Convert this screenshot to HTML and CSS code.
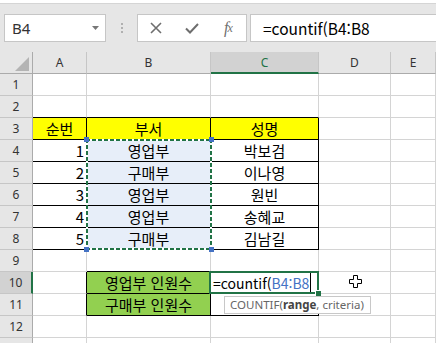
FILE: index.html
```html
<!DOCTYPE html>
<html lang="ko">
<head>
    <meta charset="UTF-8">
    <title>countif</title>
    <link rel="stylesheet" href="styles.css">
</head>
<body>
    <div class="formula-bar">
        <div class="name-box">
            <span>B4</span>
            <svg class="caret" width="7" height="4" viewBox="0 0 7 4"><polygon points="0,0 7,0 3.5,4" fill="#777"/></svg>
        </div>
        <div class="grip">
            <svg width="2" height="10" viewBox="0 0 2 10"><rect x="0" y="0" width="2" height="2" fill="#b0b0b0"/><rect x="0" y="4" width="2" height="2" fill="#b0b0b0"/><rect x="0" y="8" width="2" height="2" fill="#b0b0b0"/></svg>
        </div>
        <div class="fx-buttons">
            <span class="fx-btn">
                <svg width="12" height="12" viewBox="0 0 12 12"><path d="M1 1 L11 11 M11 1 L1 11" stroke="#6e6e6e" stroke-width="1.6"/></svg>
            </span>
            <span class="fx-btn">
                <svg width="14" height="11" viewBox="0 0 14 11"><path d="M1 5.5 L5 9.5 L13 1" fill="none" stroke="#6e6e6e" stroke-width="2"/></svg>
            </span>
            <span class="fx-btn fx-text">f<small>x</small></span>
        </div>
        <div class="formula-input">=countif(B4:B8</div>
    </div>

    <div class="sheet">
        <div class="col-head corner">
            <svg width="14" height="14" viewBox="0 0 14 14"><polygon points="14,0 14,14 0,14" fill="#b4b4b4"/></svg>
        </div>
        <div class="col-head">A</div>
        <div class="col-head">B</div>
        <div class="col-head active">C</div>
        <div class="col-head">D</div>
        <div class="col-head">E</div>

        <div class="row-head">1</div>
        <div class="cell"></div><div class="cell"></div><div class="cell"></div><div class="cell"></div><div class="cell"></div>

        <div class="row-head">2</div>
        <div class="cell top-edge"></div><div class="cell top-edge"></div><div class="cell top-edge"></div><div class="cell"></div><div class="cell"></div>

        <div class="row-head">3</div>
        <div class="cell t yellow">순번</div><div class="cell t yellow">부서</div><div class="cell t yellow">성명</div><div class="cell"></div><div class="cell"></div>

        <div class="row-head">4</div>
        <div class="cell t num">1</div>
        <div class="cell t ref">영업부
            <div class="range-box">
                <span class="handle tl"></span><span class="handle tr"></span>
                <span class="handle bl"></span><span class="handle br"></span>
            </div>
        </div>
        <div class="cell t">박보검</div><div class="cell"></div><div class="cell"></div>

        <div class="row-head">5</div>
        <div class="cell t num">2</div><div class="cell t ref">구매부</div><div class="cell t">이나영</div><div class="cell"></div><div class="cell"></div>

        <div class="row-head">6</div>
        <div class="cell t num">3</div><div class="cell t ref">영업부</div><div class="cell t">원빈</div><div class="cell"></div><div class="cell"></div>

        <div class="row-head">7</div>
        <div class="cell t num">4</div><div class="cell t ref">영업부</div><div class="cell t">송혜교</div><div class="cell"></div><div class="cell"></div>

        <div class="row-head">8</div>
        <div class="cell t num">5</div><div class="cell t ref">구매부</div><div class="cell t">김남길</div><div class="cell"></div><div class="cell"></div>

        <div class="row-head">9</div>
        <div class="cell"></div><div class="cell top-edge"></div><div class="cell top-edge"></div><div class="cell"></div><div class="cell"></div>

        <div class="row-head active">10</div>
        <div class="cell left-edge"></div>
        <div class="cell t green">영업부 인원수</div>
        <div class="cell t editing">
            <span>=countif(<span class="ref-text">B4:B8</span></span><span class="caret-line"></span>
            <div class="active-box">
                <span class="fill-handle"></span>
                <div class="tooltip">COUNTIF(<b>range</b>, criteria)</div>
            </div>
        </div>
        <div class="cell">
            <svg class="pointer" width="13" height="13" viewBox="0 0 13 13"><polygon points="4.5,0.5 8.5,0.5 8.5,4.5 12.5,4.5 12.5,8.5 8.5,8.5 8.5,12.5 4.5,12.5 4.5,8.5 0.5,8.5 0.5,4.5 4.5,4.5" fill="#fff" stroke="#000" stroke-width="1"/></svg>
        </div>
        <div class="cell"></div>

        <div class="row-head">11</div>
        <div class="cell left-edge"></div><div class="cell t green">구매부 인원수</div><div class="cell t"></div><div class="cell"></div><div class="cell"></div>

        <div class="row-head">12</div>
        <div class="cell"></div><div class="cell"></div><div class="cell"></div><div class="cell"></div><div class="cell"></div>

        <div class="row-head"></div>
        <div class="cell"></div><div class="cell"></div><div class="cell"></div><div class="cell"></div><div class="cell"></div>
    </div>
</body>
</html>
```

FILE: styles.css
```css
body {
    margin: 0;
    width: 436px;
    height: 343px;
    overflow: hidden;
    background: #fff;
    font-family: "Noto Sans CJK KR", "Noto Sans", sans-serif;
}
.formula-bar {
    margin-top: 3px;
    height: 49px;
    box-sizing: border-box;
    border-top: 1px solid #d5d5d5;
    background: #e6e6e6;
    display: flex;
    align-items: flex-start;
    padding: 10px 0 0 4px;
}
.name-box {
    width: 102px;
    height: 28px;
    box-sizing: border-box;
    border: 1px solid #c6c6c6;
    background: #fff;
    display: flex;
    align-items: center;
    justify-content: space-between;
    padding: 0 6px 0 7px;
    font-family: "Noto Sans", sans-serif;
    font-size: 15px;
    color: #333;
}
.grip {
    width: 31px;
    height: 28px;
    display: flex;
    align-items: center;
    justify-content: center;
}
.fx-buttons {
    width: 110px;
    height: 28px;
    box-sizing: border-box;
    border: 1px solid #c6c6c6;
    background: #fff;
    display: flex;
    align-items: center;
}
.fx-btn {
    width: 36px;
    display: flex;
    justify-content: center;
    align-items: center;
}
.fx-text {
    font-family: "Liberation Serif", serif;
    font-style: italic;
    font-size: 16px;
    color: #707070;
    letter-spacing: -1px;
}
.fx-text small {
    font-size: 12px;
}
.formula-input {
    flex: 1;
    height: 28px;
    margin-left: 3px;
    box-sizing: border-box;
    border: 1px solid #c6c6c6;
    border-right: none;
    background: #fff;
    display: flex;
    align-items: center;
    padding-left: 12px;
    font-size: 15.5px;
    color: #000;
}
.sheet {
    display: grid;
    grid-template-columns: 33px 54px 124px 108px 72px 1fr;
    grid-template-rows: repeat(14, 22px);
}
.sheet > div {
    box-sizing: border-box;
    display: flex;
    align-items: center;
    justify-content: center;
}
.col-head {
    background: #e6e6e6;
    border-right: 1px solid #c6c6c6;
    border-bottom: 1px solid #ababab;
    font-family: "Noto Sans", sans-serif;
    font-size: 12px;
    color: #333;
}
.col-head.corner {
    justify-content: flex-end;
    align-items: flex-end;
    padding: 0 3px 2px 0;
    border-right-color: #ababab;
}
.col-head.active {
    background: #d2d2d2;
    color: #217346;
    border-bottom: 2px solid #217346;
}
.row-head {
    background: #e6e6e6;
    border-right: 1px solid #ababab;
    border-bottom: 1px solid #c6c6c6;
    font-family: "Noto Sans", sans-serif;
    font-size: 12px;
    color: #333;
}
.row-head.active {
    background: #d2d2d2;
    border-right: 2px solid #217346;
}
.cell {
    border-right: 1px solid #d4d4d4;
    border-bottom: 1px solid #d4d4d4;
    font-size: 15px;
    color: #000;
    white-space: nowrap;
}
.cell.t {
    border-right-color: #000;
    border-bottom-color: #000;
}
.cell.top-edge {
    border-bottom-color: #000;
}
.cell.left-edge {
    border-right-color: #000;
}
.cell.num {
    justify-content: flex-end;
    padding-right: 2px;
    font-size: 15px;
}
.yellow {
    background: #ffff00;
}
.green {
    background: #92d050;
}
.ref {
    background: #e7eef9;
    position: relative;
}
.range-box {
    position: absolute;
    left: -1px;
    top: -1px;
    width: 126px;
    height: 111px;
    z-index: 2;
    background:
        repeating-linear-gradient(90deg, #217346 0 4px, #fff 4px 6px) top / 100% 2px no-repeat,
        repeating-linear-gradient(90deg, #217346 0 4px, #fff 4px 6px) bottom / 100% 2px no-repeat,
        repeating-linear-gradient(180deg, #217346 0 4px, #fff 4px 6px) left / 2px 100% no-repeat,
        repeating-linear-gradient(180deg, #217346 0 4px, #fff 4px 6px) right / 2px 100% no-repeat;
}
.handle {
    position: absolute;
    width: 5px;
    height: 5px;
    background: #4472c4;
}
.handle.tl { left: -2px; top: -2px; }
.handle.tr { right: -2px; top: -2px; }
.handle.bl { left: -2px; bottom: -2px; }
.handle.br { right: -2px; bottom: -2px; }
.editing {
    position: relative;
    justify-content: flex-start !important;
    padding-left: 2px;
    font-size: 14px;
}
.ref-text {
    color: #4472c4;
}
.caret-line {
    width: 1px;
    height: 19px;
    background: #000;
    margin-left: 1px;
}
.active-box {
    position: absolute;
    left: -2px;
    top: -1px;
    width: 110px;
    height: 23px;
    box-sizing: border-box;
    border: 2px solid #217346;
    z-index: 3;
}
.fill-handle {
    position: absolute;
    right: -4px;
    bottom: -4px;
    width: 5px;
    height: 5px;
    background: #217346;
    border-left: 1px solid #fff;
    border-top: 1px solid #fff;
}
.tooltip {
    position: absolute;
    left: 13px;
    top: 23px;
    width: 147px;
    height: 18px;
    box-sizing: border-box;
    border: 1px solid #c8c8c8;
    background: #fff;
    padding-left: 5px;
    font-family: "Noto Sans", sans-serif;
    font-size: 11.5px;
    line-height: 16px;
    color: #666;
    white-space: nowrap;
}
.tooltip b {
    color: #444;
}
.pointer {
    position: absolute;
    margin: -2px 0 0 2px;
}
```
